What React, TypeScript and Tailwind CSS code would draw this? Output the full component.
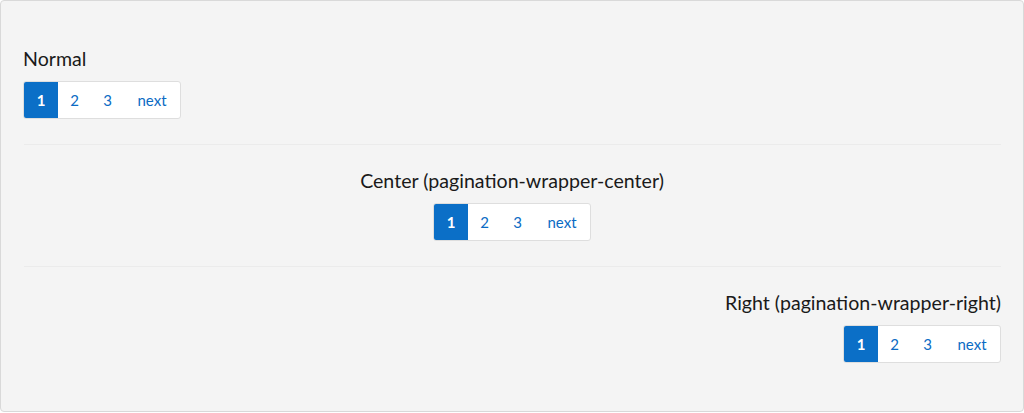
import React from "react";

function Pagination() {
  return (
    <div className="flex h-[38px] overflow-hidden rounded-[3px] border border-[#dedede] bg-white text-[15px]">
      <span className="flex w-[34px] items-center justify-center bg-[#0b6fc7] font-bold text-white">1</span>
      <span className="flex w-[33px] items-center justify-center text-[#0b6bc4]">2</span>
      <span className="flex w-[33px] items-center justify-center text-[#0b6bc4]">3</span>
      <span className="flex w-[56px] items-center justify-center text-[#0b6bc4]">next</span>
    </div>
  );
}

export default function App() {
  return (
    <div
      className="h-[412px] w-[1024px] rounded-[4px] border border-[#d9d9d9] bg-[#f4f4f4] px-[22px] pt-[44px]"
      style={{ fontFamily: "Lato, 'Open Sans', sans-serif" }}
    >
      <div className="flex flex-col items-start gap-[9px]">
        <div className="text-[19.6px] leading-[27px] text-[#1a1a1a]">Normal</div>
        <Pagination />
      </div>
      <div className="mt-[25px] mb-[22px] ml-px h-px bg-[#ebebeb]" />
      <div className="flex flex-col items-center gap-[9px]">
        <div className="text-[19.6px] leading-[27px] text-[#1a1a1a]">Center (pagination-wrapper-center)</div>
        <Pagination />
      </div>
      <div className="mt-[25px] mb-[22px] ml-px h-px bg-[#ebebeb]" />
      <div className="flex flex-col items-end gap-[9px]">
        <div className="text-[19.6px] leading-[27px] text-[#1a1a1a]">Right (pagination-wrapper-right)</div>
        <Pagination />
      </div>
    </div>
  );
}
